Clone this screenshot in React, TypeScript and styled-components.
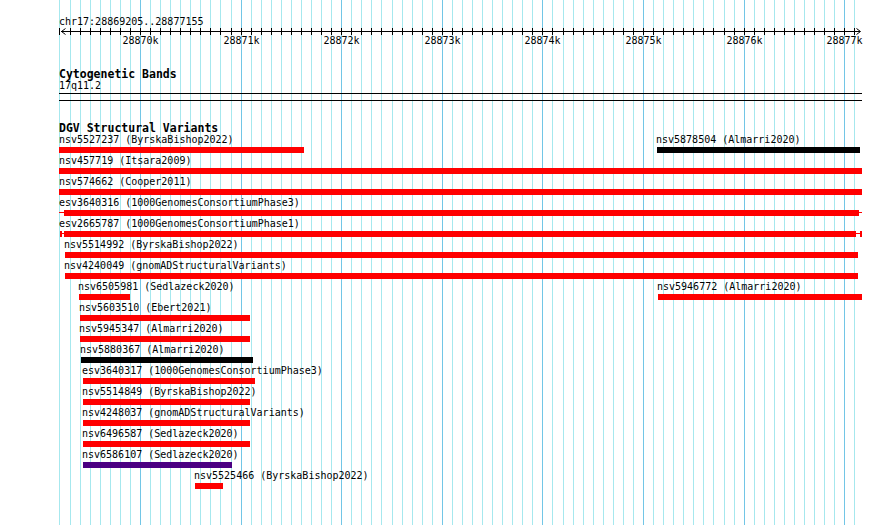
import styled, { createGlobalStyle } from 'styled-components'

const GlobalStyle = createGlobalStyle`
  html, body {
    margin: 0;
    padding: 0;
    background: #fff;
  }
  body {
    font-family: 'DejaVu Sans Mono', 'Liberation Mono', monospace;
    color: #000;
  }
`

// window chr17:28869205..28877155 drawn from x=59, ~10px per 100bp
const PLOT_X = 59
const PLOT_W = 803
const STEP = 800 / 7951 * 100
const guideX = (k: number) => Math.round(59.47 + k * STEP)
const GUIDES = Array.from({ length: 80 }, (_, k) => k)

const RED = '#ff0000'
const BLACK = '#000000'
const PURPLE = '#4b0082'

type Piece = { kind: 'gap' | 'stem' | 'cap' | 'thick'; w: number }
type Item = { label: string; x0: number; x1: number; color: string; pieces?: Piece[] }

const ROWS: Item[][] = [
  [
    { label: 'nsv5527237 (ByrskaBishop2022)', x0: 59, x1: 304, color: RED },
    { label: 'nsv5878504 (Almarri2020)', x0: 657, x1: 860, color: BLACK },
  ],
  [{ label: 'nsv457719 (Itsara2009)', x0: 59, x1: 862, color: RED }],
  [{ label: 'nsv574662 (Cooper2011)', x0: 59, x1: 862, color: RED }],
  [
    {
      label: 'esv3640316 (1000GenomesConsortiumPhase3)', x0: 59, x1: 862, color: RED,
      pieces: [{ kind: 'stem', w: 5 }, { kind: 'thick', w: 795 }, { kind: 'stem', w: 3 }],
    },
  ],
  [
    {
      label: 'esv2665787 (1000GenomesConsortiumPhase1)', x0: 59, x1: 862, color: RED,
      pieces: [
        { kind: 'gap', w: 1 }, { kind: 'cap', w: 2 }, { kind: 'stem', w: 2 },
        { kind: 'thick', w: 792 }, { kind: 'stem', w: 4 }, { kind: 'cap', w: 2 },
      ],
    },
  ],
  [{ label: 'nsv5514992 (ByrskaBishop2022)', x0: 65, x1: 858, color: RED }],
  [{ label: 'nsv4240049 (gnomADStructuralVariants)', x0: 65, x1: 858, color: RED }],
  [
    { label: 'nsv6505981 (Sedlazeck2020)', x0: 79, x1: 130, color: RED },
    { label: 'nsv5946772 (Almarri2020)', x0: 658, x1: 862, color: RED },
  ],
  [{ label: 'nsv5603510 (Ebert2021)', x0: 80, x1: 250, color: RED }],
  [{ label: 'nsv5945347 (Almarri2020)', x0: 80, x1: 250, color: RED }],
  [{ label: 'nsv5880367 (Almarri2020)', x0: 81, x1: 253, color: BLACK }],
  [{ label: 'esv3640317 (1000GenomesConsortiumPhase3)', x0: 83, x1: 255, color: RED }],
  [{ label: 'nsv5514849 (ByrskaBishop2022)', x0: 83, x1: 250, color: RED }],
  [{ label: 'nsv4248037 (gnomADStructuralVariants)', x0: 83, x1: 250, color: RED }],
  [{ label: 'nsv6496587 (Sedlazeck2020)', x0: 83, x1: 250, color: RED }],
  [{ label: 'nsv6586107 (Sedlazeck2020)', x0: 83, x1: 232, color: PURPLE }],
  [{ label: 'nsv5525466 (ByrskaBishop2022)', x0: 195, x1: 223, color: RED }],
]

const Page = styled.div`
  position: relative;
  width: 890px;
  height: 525px;
  overflow: hidden;
  background: #fff;
`

const Guides = styled.svg`
  position: absolute;
  left: 0;
  top: 0;
  width: 890px;
  height: 525px;
`

const Content = styled.div`
  position: relative;
  padding: 16px 0 0 ${PLOT_X}px;
`

const Position = styled.div`
  font-size: 10px;
  line-height: 12px;
  white-space: nowrap;
`

const RulerSvg = styled.svg`
  display: block;
  overflow: visible;
  font-family: 'DejaVu Sans Mono', 'Liberation Mono', monospace;
  font-size: 10px;
`

const TrackTitle = styled.div<{ $gap: number }>`
  margin-top: ${(p) => p.$gap}px;
  font-size: 11.5px;
  font-weight: bold;
  line-height: 12px;
  white-space: nowrap;
`

const BandLabel = styled.div`
  font-size: 10px;
  line-height: 12px;
`

const Band = styled.div`
  margin-top: 1px;
  width: ${PLOT_W}px;
  height: 6px;
  border-top: 1px solid #000;
  border-bottom: 1px solid #000;
`

const Row = styled.div`
  display: grid;
  grid-template-columns: ${PLOT_W}px;
  height: 21px;

  & > * {
    grid-area: 1 / 1;
  }
`

const Feature = styled.div`
  justify-self: start;
  display: flex;
  flex-direction: column;
`

const Label = styled.div<{ $clipped: boolean }>`
  margin-left: ${(p) => (p.$clipped ? 0 : -1)}px;
  font-size: 10px;
  line-height: 12px;
  white-space: nowrap;
`

const Bar = styled.div<{ $color: string }>`
  margin-top: 1px;
  height: 6px;
  display: flex;
  align-items: flex-start;
  background: ${(p) => p.$color};
`

const Segment = styled.div<{ $kind: Piece['kind']; $color: string }>`
  flex: none;
  height: ${(p) => (p.$kind === 'stem' ? 1 : 6)}px;
  margin-top: ${(p) => (p.$kind === 'stem' ? 2 : 0)}px;
  background: ${(p) => (p.$kind === 'gap' ? 'transparent' : p.$color)};
`

function Ruler() {
  const ticks = GUIDES.map((k) => guideX(k) - PLOT_X)
  const left = 61 - PLOT_X
  const right = 860 - PLOT_X
  return (
    <RulerSvg width={PLOT_W} height={20}>
      <rect x={left} y={3} width={right - left} height={1} fill="#000" shapeRendering="crispEdges" />
      {ticks.map((x) => (
        <rect key={x} x={x} y={0} width={1} height={7} fill="#000" shapeRendering="crispEdges" />
      ))}
      <path
        d={`M${left + 4.5} 0.5 L${left + 0.5} 3.5 L${left + 4.5} 6.5 M${right - 3.5} 0.5 L${right + 0.5} 3.5 L${right - 3.5} 6.5`}
        fill="none"
        stroke="#000"
        strokeWidth={1}
      />
      {[0, 1, 2, 3, 4, 5, 6, 7].map((j) => (
        <text key={j} x={guideX(8 + j * 10) - PLOT_X + 0.5} y={16} textAnchor="middle" fill="#000">
          {28870 + j}k
        </text>
      ))}
    </RulerSvg>
  )
}

function Track({ item }: { item: Item }) {
  const width = item.x1 - item.x0
  return (
    <Feature style={{ marginLeft: item.x0 - PLOT_X, width }}>
      <Label $clipped={item.x0 <= PLOT_X}>{item.label}</Label>
      {item.pieces ? (
        <Bar $color="transparent">
          {item.pieces.map((p, i) => (
            <Segment key={i} $kind={p.kind} $color={item.color} style={{ width: p.w }} />
          ))}
        </Bar>
      ) : (
        <Bar $color={item.color} />
      )}
    </Feature>
  )
}

export default function App() {
  return (
    <Page>
      <GlobalStyle />
      <Guides width={890} height={525}>
        {GUIDES.map((k) => (
          <rect
            key={k}
            x={guideX(k)}
            y={0}
            width={1}
            height={525}
            fill={k % 10 === 8 ? '#72c6e6' : '#a6e8ee'}
            shapeRendering="crispEdges"
          />
        ))}
      </Guides>
      <Content>
        <Position>chr17:28869205..28877155</Position>
        <Ruler />
        <TrackTitle $gap={20}>Cytogenetic Bands</TrackTitle>
        <BandLabel>17q11.2</BandLabel>
        <Band />
        <TrackTitle $gap={21}>DGV Structural Variants</TrackTitle>
        {ROWS.map((row, i) => (
          <Row key={i}>
            {row.map((item) => (
              <Track key={item.label} item={item} />
            ))}
          </Row>
        ))}
      </Content>
    </Page>
  )
}
